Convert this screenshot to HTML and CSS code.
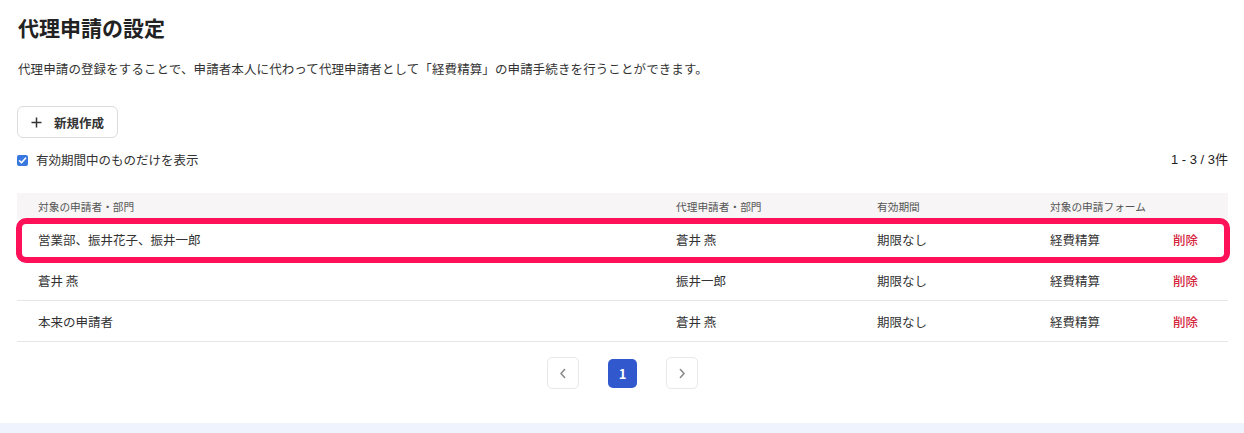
FILE: index.html
```html
<!DOCTYPE html>
<html lang="ja">
<head>
<meta charset="utf-8">
<title>代理申請の設定</title>
<link rel="stylesheet" href="styles.css">
</head>
<body>
<main class="page">
  <h1 class="title">代理申請の設定</h1>
  <p class="desc">代理申請の登録をすることで、申請者本人に代わって代理申請者として「経費精算」の申請手続きを行うことができます。</p>
  <button class="btn-new" type="button">
    <svg class="plus" width="11" height="11" viewBox="0 0 11 11"><path d="M5.5 0.5v10M0.5 5.5h10" stroke="#333" stroke-width="1.5" fill="none"/></svg>
    <span>新規作成</span>
  </button>
  <div class="filter-row">
    <label class="check">
      <span class="box"><svg width="9" height="9" viewBox="0 0 9 9"><path d="M1.5 4.8l2 2 4-4.6" stroke="#fff" stroke-width="1.6" fill="none" stroke-linecap="round" stroke-linejoin="round"/></svg></span>
      <span>有効期間中のものだけを表示</span>
    </label>
    <div class="count">1 - 3 / 3件</div>
  </div>
  <div class="table">
    <div class="thead">
      <div class="cell">対象の申請者・部門</div>
      <div class="cell">代理申請者・部門</div>
      <div class="cell">有効期間</div>
      <div class="cell">対象の申請フォーム</div>
      <div class="cell"></div>
    </div>
    <div class="trow highlighted">
      <div class="cell">営業部、振井花子、振井一郎</div>
      <div class="cell">蒼井 燕</div>
      <div class="cell">期限なし</div>
      <div class="cell">経費精算</div>
      <div class="cell del">削除</div>
      <div class="mark"></div>
    </div>
    <div class="trow">
      <div class="cell">蒼井 燕</div>
      <div class="cell">振井一郎</div>
      <div class="cell">期限なし</div>
      <div class="cell">経費精算</div>
      <div class="cell del">削除</div>
    </div>
    <div class="trow">
      <div class="cell">本来の申請者</div>
      <div class="cell">蒼井 燕</div>
      <div class="cell">期限なし</div>
      <div class="cell">経費精算</div>
      <div class="cell del">削除</div>
    </div>
  </div>
  <nav class="pager">
    <button class="pg nav" type="button"><svg width="8" height="11" viewBox="0 0 8 11"><path d="M5.6 1.5L2 5.5l3.6 4" stroke="#8a8a8a" stroke-width="1.6" fill="none" stroke-linecap="round" stroke-linejoin="round"/></svg></button>
    <button class="pg current" type="button">1</button>
    <button class="pg nav" type="button"><svg width="8" height="11" viewBox="0 0 8 11"><path d="M2.4 1.5L6 5.5l-3.6 4" stroke="#8a8a8a" stroke-width="1.6" fill="none" stroke-linecap="round" stroke-linejoin="round"/></svg></button>
  </nav>
</main>
<div class="band"></div>
</body>
</html>
```
FILE: styles.css
```css
* { box-sizing: border-box; }
html, body { margin: 0; padding: 0; background: #fff; }
body {
  font-family: "Noto Sans CJK JP", "Noto Sans", "Liberation Sans", sans-serif;
  color: #333;
  height: 433px;
  overflow: hidden;
}
.page {
  padding: 12px 16px 0 17px;
  display: flex;
  flex-direction: column;
  height: 423px;
}
.title {
  margin: 0 0 0 1px;
  font-size: 21px;
  line-height: 30px;
  font-weight: 700;
  color: #222;
}
.desc {
  margin: 17px 0 0 1px;
  font-size: 12.5px;
  letter-spacing: 0.1px;
  line-height: 20px;
  color: #333;
}
.btn-new {
  margin-top: 27px;
  align-self: flex-start;
  width: 101px;
  height: 32px;
  display: flex;
  align-items: center;
  gap: 12px;
  padding: 0 0 0 13px;
  border: 1px solid #dcdcdc;
  border-radius: 6px;
  background: #fff;
  font-family: inherit;
  font-size: 12.5px;
  font-weight: 700;
  color: #333;
}
.plus { display: block; flex: none; }
.filter-row {
  margin-top: 12px;
  height: 20px;
  display: flex;
  align-items: center;
  justify-content: space-between;
  font-size: 12.5px;
  line-height: 20px;
}
.check { display: flex; align-items: center; gap: 8px; color: #333; }
.box {
  width: 11px;
  height: 11px;
  border-radius: 2px;
  background: #3878e0;
  display: flex;
  align-items: center;
  justify-content: center;
}
.box svg { display: block; }
.count {
  font-family: "Liberation Sans", "Noto Sans CJK JP", sans-serif;
  font-size: 13px;
  color: #222;
}
.table { margin-top: 23px; }
.thead, .trow {
  display: grid;
  grid-template-columns: 638px 201px 173px 123px 1fr;
  align-items: center;
}
.thead {
  height: 26px;
  background: #f7f5f5;
  font-size: 10.7px;
  color: #555;
}
.trow {
  position: relative;
  height: 41px;
  border-bottom: 1px solid #e6e6e6;
  font-size: 12.5px;
  color: #333;
}
.cell { padding-left: 21px; white-space: nowrap; }
.del { color: #d4253c; font-weight: 500; }
.mark {
  position: absolute;
  top: -1px;
  left: -1px;
  right: -2px;
  bottom: -4px;
  border: 6px solid #ff115a;
  border-radius: 10px;
  pointer-events: none;
}
.pager {
  margin-top: 15px;
  display: flex;
  justify-content: center;
  align-items: center;
  gap: 29px;
}
.pg {
  display: flex;
  align-items: center;
  justify-content: center;
  padding: 0;
  font-family: inherit;
}
.nav {
  width: 32px;
  height: 32px;
  border: 1px solid #e8e8e8;
  border-radius: 5px;
  background: #fff;
}
.current {
  width: 29px;
  height: 29px;
  border: none;
  border-radius: 5px;
  background: #3158cc;
  color: #fff;
  font-size: 13px;
  font-weight: 700;
}
.band { height: 10px; background: #eef3fd; }
```
